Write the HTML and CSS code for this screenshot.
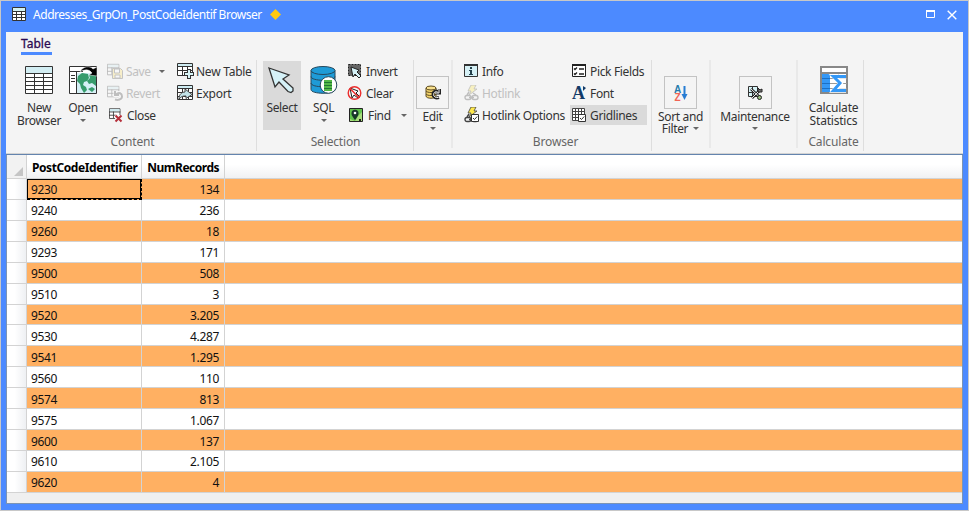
FILE: index.html
```html
<!DOCTYPE html>
<html lang="en">
<head>
<meta charset="utf-8">
<title>Addresses_GrpOn_PostCodeIdentif Browser</title>
<link rel="stylesheet" href="styles.css">
</head>
<body>
<svg class="defs" aria-hidden="true">
  <symbol id="tbl" viewBox="0 0 16 16"><path d="M.5 1.5h13v12H.5z" fill="#fff" stroke="#333"/><path d="M1 2h12v3H1z" fill="#cfecf2"/><path d="M0 5.500h14M0 9.500h9M5.500 5v8" stroke="#333" fill="none"/></symbol>
  <symbol id="check" viewBox="0 0 8 8"><path d="M.5.500h7v7h-7z" fill="#fff" stroke="#333"/><path d="M2 4l1.500 1.500L6.200 2.500" fill="none" stroke="#333"/></symbol>
  <symbol id="bolt" viewBox="0 0 16 16"><path d="M7 0h5l-2 4h3L5 10l2-4H4z" fill="#ffe84a" stroke="#444" stroke-width=".8"/><g fill="none" stroke="#444" stroke-width="1.400"><rect x="1" y="10.500" width="6" height="4" rx="2"/><rect x="8" y="10.500" width="6" height="4" rx="2"/><path d="M5 12.500h5M3 10l2-3M9 8l3 2"/></g></symbol>
</svg>
<div class="window">
  <header class="titlebar">
    <svg class="app-icon" width="14" height="14"><path d="M.5.500h13v13H.5z" fill="#fff" stroke="#333"/><path d="M1 1h12v3H1z" fill="#d3f2f2"/><path d="M0 4.500h14M0 7.500h14M0 10.500h14M4.500 4v9M9.500 4v9" stroke="#333"/></svg>
    <span class="title">Addresses_GrpOn_PostCodeIdentif Browser</span>
    <svg class="diamond" width="11" height="11"><path d="M5.500 0L11 5.500 5.500 11 0 5.500z" fill="#ffc90e"/></svg>
    <svg class="max" width="9" height="8"><path d="M.5 1h8v6.500h-8z" fill="none" stroke="#fff"/><path d="M0 1h9" stroke="#fff" stroke-width="2"/></svg>
    <svg class="x" width="10" height="10"><path d="M.7.700l8.600 8.600M9.300.700L.7 9.300" stroke="#fff" stroke-width="1.400"/></svg>
  </header>
  <main class="client">
    <section class="ribbon">
      <nav class="tabs"><span class="tab">Table</span></nav>
      <div class="groups">
        <div class="group g-content">
          <div class="tools">
            <div class="big new-browser">
              <svg width="28" height="28"><path d="M.5.500h27v27H.5z" fill="#fff" stroke="#333"/><path d="M1 1h26v6H1z" fill="#d3eef3"/><path d="M0 7.500h28M0 11.500h28M0 15.500h28M0 19.500h28M0 23.500h28M9.500 7v20M18.500 7v20" stroke="#333"/></svg>
              <span>New<br>Browser</span>
            </div>
            <div class="big open">
              <svg width="28" height="28"><path d="M.5.500h27v27H.5z" fill="#fff" stroke="#333"/><path d="M8 7h19v20H8z" fill="#d6f0f6"/><path d="M0 5.500h14M7.500 6v21M2 9.500h4M2 12.500h4M2 15.500h4" stroke="#333"/><path d="M9 10l4-3 6 1 1 4-2 3-3 1-1 3 3 2 1 3-3 3-3-5-1-4-3-3zM20 9l7-1v12l-4-3-3 1-2-3 3-3zM19 23l4-2 3 2-3 3z" fill="#379c6c"/><path d="M11 6C14 0 21-.500 24 3l4-2v9l-8-1 3-2c-3-4-7-4-12-1z" fill="#000" stroke="#fff" stroke-width=".5"/></svg>
              <span class="l-open">Open</span><i class="arrow"></i>
            </div>
            <div class="stack s-save">
              <div class="small off"><svg width="16" height="16"><use href="#tbl" width="14" height="14"/><path d="M5.500 5.500h8l2 2v8h-10z" fill="#ffe36a" stroke="#555"/><path d="M7.500 6h5v4h-5zM8 12h5v3H8z" fill="#fff" stroke="#555"/></svg><span class="l-save">Save</span><i class="arrow"></i></div>
              <div class="small off"><svg width="16" height="16"><use href="#tbl" width="14" height="14"/><path d="M8.500 6v4h4M9 9.500c3-3 6-1 6 2s-4 4-7 3" fill="none" stroke="#fff" stroke-width="4"/><path d="M8 6v4h4M9 9.500c3-3 6-1 6 2s-4 4-7 3" fill="none" stroke="#444" stroke-width="2"/></svg><span class="l-revert">Revert</span></div>
              <div class="small"><svg width="16" height="16"><use href="#tbl" x="2" y="0" width="13" height="14"/><path d="M8 8h8v8H8z" fill="#f4f4f4"/><path d="M8.500 8.500l6 6m0-6l-6 6" stroke="#b52f3a" stroke-width="2"/></svg><span class="l-close">Close</span></div>
            </div>
            <div class="stack s-new">
              <div class="small"><svg width="17" height="16"><path d="M.5.500h15v12H.5z" fill="#fff" stroke="#333"/><path d="M1 1h14v2H1z" fill="#cfecf2"/><path d="M0 3.500h16M0 7.500h16M5.500 3v10M10.500 3v10" stroke="#333"/><path d="M12 6v10M7 11h10" stroke="#333" stroke-width="4"/><path d="M12 7v8M8 11h8" stroke="#d9f5f8" stroke-width="2"/></svg><span class="l-newtable">New Table</span></div>
              <div class="small"><svg width="17" height="16"><path d="M.5.500h15v14H.5z" fill="#fff" stroke="#333"/><path d="M1 1h14v2H1z" fill="#cfecf2"/><path d="M0 3.500h16M0 7.500h16M0 11.500h16M5.500 3v12M11.500 3v12" stroke="#333"/><path d="M2 14c0-5 3-7 6-7V4l7 5.500-6 4V11c-3 0-4 0-7 3z" fill="#c2e3e8" stroke="#444"/></svg><span class="l-export">Export</span></div>
            </div>
          </div>
          <div class="caption">Content</div>
        </div>
        <div class="group g-selection">
          <div class="tools">
            <div class="big select active">
              <svg width="28" height="28"><path d="M1 2l20 7-6 4 10 9v3l-2 1.500-3-1L11 16l-4 5z" fill="#d6f2f8" stroke="#333" stroke-width="1.300"/></svg>
              <span>Select</span>
            </div>
            <div class="big sql">
              <svg width="28" height="28"><path d="M1 4.500v19c0 5 24 5 24 0v-19" fill="#1e9bd7" stroke="#27485c"/><ellipse cx="13" cy="4.500" rx="12" ry="4" fill="#1e9bd7" stroke="#27485c"/><path d="M1 10.500c0 5 24 5 24 0M1 17c0 5 24 5 24 0" fill="none" stroke="#27485c"/><circle cx="18.500" cy="19" r="8.300" fill="#fff" stroke="#27485c"/><path d="M14 14h8v11h-8z" fill="#55b948"/><path d="M14 16.500h8M14 19.500h8M14 22.500h8" stroke="#207932"/></svg>
              <span>SQL</span><i class="arrow"></i>
            </div>
            <div class="stack s-invert">
              <div class="small"><svg width="16" height="16"><path d="M1.500 1.500h12v11h-12z" fill="#666" stroke="#222" stroke-dasharray="2 1"/><path d="M4 4l8 3-2 2 4 4-2 2-4-4-2 3z" fill="#d6f2f8" stroke="#222"/></svg><span>Invert</span></div>
              <div class="small"><svg width="16" height="16"><path d="M3 3l8 3-2 2 4 4-2 1-4-3-2 3z" fill="#fff" stroke="#222"/><circle cx="7.500" cy="8" r="6.300" fill="none" stroke="#ec2d2d" stroke-width="1.400"/><path d="M3 3.500l9 9" stroke="#ec2d2d" stroke-width="1.500"/></svg><span>Clear</span></div>
              <div class="small find"><svg width="16" height="16"><path d="M2.500 1.500h13v13h-13z" fill="#61c34c" stroke="#222"/><path d="M8 14l3-5 4-4v9zM3 12l5 2H3z" fill="#a7dd7b"/><path d="M8 13C5 9 4.500 8 4.500 6.200a3.500 3.500 0 017 0C11.500 8 11 9 8 13z" fill="#17372b"/><circle cx="8" cy="6" r="1.300" fill="#fff"/><path d="M12 12h2v2h-2z" fill="#222"/></svg><span>Find</span><i class="arrow"></i></div>
            </div>
          </div>
          <div class="caption">Selection</div>
        </div>
        <div class="group g-edit soft">
          <div class="boxed">
            <div class="box"><svg width="16" height="16"><path d="M1 3v8c0 3 10 3 10 0V3" fill="#f2d36b" stroke="#5c4b22"/><ellipse cx="6" cy="3" rx="5" ry="2" fill="#f7df8b" stroke="#5c4b22"/><path d="M1 6c1 2 9 2 10 0M1 9c1 2 9 2 10 0" fill="none" stroke="#5c4b22"/><path d="M14.500 4v4h-4M14 7.500c-3-3-6-1-6 2s3 4 6 3" fill="none" stroke="#222" stroke-width="3"/><path d="M14 4v4h-4M13 7.500c-2-2-4.500 0-4.500 2s2 3.500 5 3" fill="none" stroke="#eee"/></svg></div>
            <span>Edit</span><i class="arrow"></i>
          </div>
        </div>
        <div class="group g-browser">
          <div class="tools">
            <div class="stack s-info">
              <div class="small"><svg width="16" height="16"><path d="M.5 1.500h13v12H.5z" fill="#d5f0f5" stroke="#333"/><path d="M0 2h14" stroke="#333" stroke-width="2"/><path d="M6 4h2v2H6zM5 7h3v4h1v1H5v-1h1V8H5z" fill="#23404b"/></svg><span>Info</span></div>
              <div class="small off"><svg width="16" height="16"><use href="#bolt" width="16" height="16"/></svg><span>Hotlink</span></div>
              <div class="small"><svg width="16" height="16"><use href="#bolt" width="16" height="16"/><use href="#check" x="7" y="7" width="8" height="8"/></svg><span>Hotlink Options</span></div>
            </div>
            <div class="stack s-pick">
              <div class="small"><svg width="16" height="16"><path d="M1.500 1.500h13v12h-13z" fill="#fff" stroke="#222"/><path d="M1 2h14" stroke="#222" stroke-width="2"/><path d="M3 5.500l1 1 2-2M3 10.500l1 1 2-2M8 6h5M8 11h5" fill="none" stroke="#222" stroke-width="1.300"/></svg><span>Pick Fields</span></div>
              <div class="small"><svg class="open-edge" width="16" height="16"><text class="font-a" x="1" y="14">A</text><path d="M12 1l3 2-3 3z" fill="#123a68"/></svg><span>Font</span></div>
              <div class="small active"><svg width="16" height="16"><path d="M1.500 1.500h12v12h-12z" fill="#fff" stroke="#444"/><path d="M4.500 1v13M7.500 1v13M10.500 1v13M1 4.500h13M1 7.500h13M1 10.500h13" stroke="#444"/><use href="#check" x="7" y="7" width="8" height="8"/></svg><span>Gridlines</span></div>
            </div>
          </div>
          <div class="caption">Browser</div>
        </div>
        <div class="group g-sort soft">
          <div class="boxed">
            <div class="box"><svg class="open-edge" width="16" height="16"><text class="az a" x="1" y="7.500">A</text><text class="az z" x="1.500" y="15.500">Z</text><path d="M11.500 1v10" stroke="#267cd3" stroke-width="2"/><path d="M8.500 9h6l-3 6z" fill="#267cd3"/></svg></div>
            <span>Sort and</span><span class="filter">Filter <i class="arrow"></i></span>
          </div>
        </div>
        <div class="group g-maint soft">
          <div class="boxed">
            <div class="box"><svg width="16" height="16"><path d="M1.500 1.500h9v10h-9z" fill="#d7f3f6" stroke="#333"/><path d="M1 7.500h9M5.500 2v9" stroke="#333"/><path d="M4 4l9 8.500M5 13l8-8" stroke="#222" stroke-width="2.600"/><path d="M4 4l9 8.500M5 13l8-8" stroke="#eee"/><path d="M11 3l2 2 2-1v3h-4z" fill="#777" stroke="#222"/><circle cx="12.500" cy="12.500" r="2" fill="#9abe81" stroke="#222"/></svg></div>
            <span>Maintenance</span><i class="arrow"></i>
          </div>
        </div>
        <div class="group g-calc">
          <div class="tools">
            <div class="big">
              <svg width="28" height="28"><path d="M1 1h26v26H1z" fill="#fff" stroke="#888" stroke-width="2"/><path d="M10 12.500h17M10 17.500h17M10 22.500h17M18.500 8v18" stroke="#999"/><path d="M2 8h8v18H2z" fill="#3498f7"/><path d="M2 12.500h8M2 17.500h8M2 22.500h8" stroke="#1d70c4"/><path d="M1 7h26" stroke="#888" stroke-width="2"/><path d="M26 10.500H14l6.500 6.500-6.500 7.500h12" fill="none" stroke="#fff" stroke-width="4.500"/><path d="M26 10.500H13.500L20 17l-6.500 7.500H26" fill="none" stroke="#3498f7" stroke-width="3"/></svg>
              <span>Calculate<br>Statistics</span>
            </div>
          </div>
          <div class="caption">Calculate</div>
        </div>
      </div>
    </section>
    <section class="sheet">
      <div class="row head"><span class="corner"><svg width="10" height="10"><path d="M9 0v9H0z" fill="#c5c5c5"/></svg></span><span class="code">PostCodeIdentifier</span><span class="num">NumRecords</span><span></span></div>
      <div class="row current"><span></span><span class="code">9230</span><span class="num">134</span><span></span></div>
      <div class="row"><span></span><span class="code">9240</span><span class="num">236</span><span></span></div>
      <div class="row"><span></span><span class="code">9260</span><span class="num">18</span><span></span></div>
      <div class="row"><span></span><span class="code">9293</span><span class="num">171</span><span></span></div>
      <div class="row"><span></span><span class="code">9500</span><span class="num">508</span><span></span></div>
      <div class="row"><span></span><span class="code">9510</span><span class="num">3</span><span></span></div>
      <div class="row"><span></span><span class="code">9520</span><span class="num">3.205</span><span></span></div>
      <div class="row"><span></span><span class="code">9530</span><span class="num">4.287</span><span></span></div>
      <div class="row"><span></span><span class="code">9541</span><span class="num">1.295</span><span></span></div>
      <div class="row"><span></span><span class="code">9560</span><span class="num">110</span><span></span></div>
      <div class="row"><span></span><span class="code">9574</span><span class="num">813</span><span></span></div>
      <div class="row"><span></span><span class="code">9575</span><span class="num">1.067</span><span></span></div>
      <div class="row"><span></span><span class="code">9600</span><span class="num">137</span><span></span></div>
      <div class="row"><span></span><span class="code">9610</span><span class="num">2.105</span><span></span></div>
      <div class="row"><span></span><span class="code">9620</span><span class="num">4</span><span></span></div>
    </section>
  </main>
</div>
</body>
</html>
```
FILE: styles.css
```css
* { box-sizing: border-box; }
body { margin: 0; font: 12px/13px "Noto Sans", "Open Sans", sans-serif; color: #333; overflow: hidden; letter-spacing: -.35px; }
svg { display: block; flex: none; }
.open-edge { overflow: visible; }
.defs { position: absolute; width: 0; height: 0; }
.window { width: 969px; height: 511px; border: 1px solid #c8c8c8; background: #4c8aff; padding: 0 5px 6px; }
.titlebar { height: 31px; display: flex; align-items: center; padding: 0 6px 5px 6px; color: #fff; }
.title { margin-left: 7px; width: 237px; white-space: nowrap; letter-spacing: -.46px; }
.diamond { flex: none; }
.max { margin-left: auto; margin-right: 12px; }
.x { margin-top: 1px; }
.client { height: 472px; background: #efefef; }
.ribbon { height: 123px; background: #f4f4f4; border-bottom: 1px solid #6484ae; box-shadow: inset 0 -1px #d3d3d3; }
.tabs { height: 28px; padding: 4px 0 0 15px; }
.tab { display: block; width: 31px; height: 19px; line-height: 16px; border-bottom: 3px solid #4c8aff; color: #2b0a52; letter-spacing: 0; -webkit-text-stroke: .3px #2b0a52; }
.groups { display: flex; height: 92px; }
.group { height: 91px; flex: none; border-right: 1px solid #dedede; display: flex; flex-direction: column; white-space: nowrap; }
.soft { border-right: 2px solid #e9e9e9; height: 88px; }
.tools { display: flex; height: 75px; }
.caption { text-align: center; color: #666; letter-spacing: -.15px; }
.g-content { width: 251px; }
.g-content .caption { padding-left: 3px; }
.g-selection { width: 157px; padding-left: 6px; }
.g-selection .caption { padding-right: 5px; }
.g-edit { width: 39px; }
.g-browser { width: 199px; padding-left: 11px; }
.g-browser .caption { padding-right: 4px; }
.g-sort { width: 59px; }
.g-maint { width: 87px; padding-left: 3px; }
.g-calc { width: 66px; }
.big { display: flex; flex-direction: column; align-items: center; padding-top: 6px; text-align: center; }
.big span { margin-top: 7px; }
.new-browser { width: 44px; margin-left: 11px; }
.open { width: 44px; }
.select { width: 38px; margin-top: 1px; height: 69px; padding-top: 5px; }
.sql { width: 44px; padding-left: 1px; }
.g-calc .big { width: 100%; padding-left: 6px; }
.g-calc .caption { padding-left: 6px; }
.g-calc { letter-spacing: -.2px; }
.active { background: #dadada; }
.arrow { display: inline-block; flex: none; width: 0; height: 0; border: 3px solid transparent; border-top-color: #666; border-bottom: 0; }
.big > .arrow { margin-top: 5px; }
.stack { padding-top: 1px; flex: none; }
.small { height: 20px; margin-bottom: 2px; display: flex; align-items: center; padding-left: 2px; }
.small span { margin-left: 3px; }
.off svg { opacity: .3; }
.off span { color: #c1c1c1; }
.s-save { width: 69px; }
.s-save .small:last-child span { margin-left: 4px; }
.off .arrow { margin-left: 8px; }
.s-new { padding-left: 1px; letter-spacing: -.25px; }
.s-new .small span { margin-left: 2px; }
.s-invert { margin-left: 2px; }
.s-invert .small { padding-left: 0; }
.find .arrow { margin-left: 10px; }
.find span { margin-left: 5px; }
.s-info { width: 106px; }
.s-info .small { padding-left: 0; }
.s-info .small span { margin-left: 2px; }
.s-pick .small { padding-left: 1px; width: 77px; }
.boxed { display: flex; flex-direction: column; align-items: center; padding-top: 16px; }
.box { width: 33px; height: 33px; border: 1px solid #c3c3c3; display: grid; place-items: center; margin-bottom: 1px; }
.boxed > .arrow { margin-top: 4px; }
.filter { display: flex; align-items: center; gap: 5px; }
.boxed > .filter { margin-top: -1px; }
.font-a { font: bold 18px "Liberation Serif", serif; fill: #123a68; letter-spacing: 0; }
.az { font: bold 10px "Liberation Sans", sans-serif; letter-spacing: 0; }
.az.a { fill: #267cad; }
.az.z { fill: #f26455; }
.sheet { height: 349px; border: solid #7c94b4; border-width: 0 1px 1px; display: grid; grid-template-rows: 24px repeat(15, 20.93px); }
.row { display: grid; grid-template-columns: 20px 115px 83px 1fr; background: #fff; color: #111; letter-spacing: -.35px; }
.row > span { border-right: 1px solid #d3d3d3; border-bottom: 1px solid #d3d3d3; display: flex; align-items: center; padding-top: 2px; }
.row > span:last-child { border-right: 0; }
.row:nth-child(even) > span:not(:first-child) { background: #ffb062; }
.row > span:first-child { background: linear-gradient(90deg, #fff 40%, #eef0f3); }
.row .code { padding-left: 4px; }
.row .num { justify-content: flex-end; padding-right: 5px; }
.head { font-weight: bold; color: #000; background: linear-gradient(#fff 40%, #eff0f2); letter-spacing: -.42px; }
.head .code { padding-left: 5px; }
.head .num { letter-spacing: -.5px; }
.row.head > .corner { background: #f2f2f2; justify-content: flex-end; align-items: flex-end; padding: 0 2px 1px 0; }
.row.current .code { border-right: 1px dashed #000; border-bottom: 1px dashed #000; box-shadow: inset 0 0 0 1px #000; }
```
